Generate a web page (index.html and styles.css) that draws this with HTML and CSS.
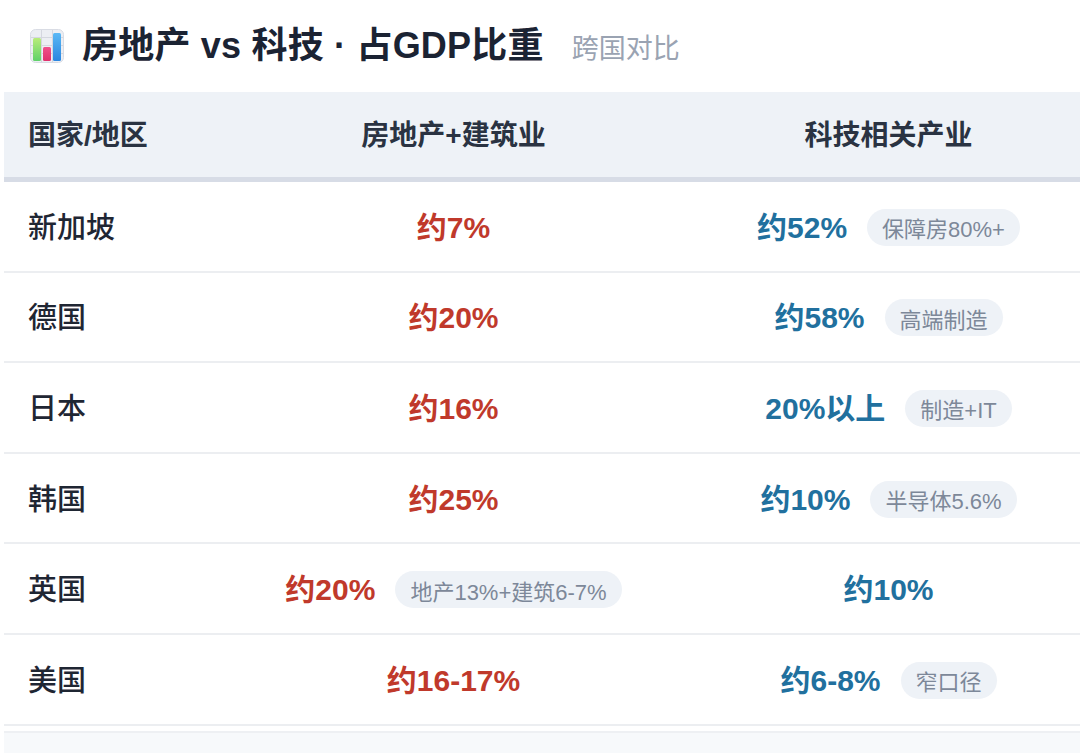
FILE: index.html
```html
<!DOCTYPE html>
<html lang="zh">
<head>
<meta charset="utf-8">
<link rel="stylesheet" href="styles.css">
</head>
<body>
<div class="title-bar">
  <svg class="icon" width="34" height="34" viewBox="0 0 34 34">
    <defs>
      <linearGradient id="gg" x1="0" y1="0" x2="0" y2="1"><stop offset="0" stop-color="#b9ec7a"/><stop offset="1" stop-color="#5fd16a"/></linearGradient>
      <linearGradient id="pg" x1="0" y1="0" x2="0" y2="1"><stop offset="0" stop-color="#f0508a"/><stop offset="1" stop-color="#e0306c"/></linearGradient>
      <linearGradient id="bg" x1="0" y1="0" x2="0" y2="1"><stop offset="0" stop-color="#5ab8f5"/><stop offset="1" stop-color="#2a86e0"/></linearGradient>
    </defs>
    <rect x="0.5" y="0.5" width="33" height="33" rx="5" fill="#eceef3" stroke="#d9dce4"/>
    <path d="M11.5 1v32M22.5 1v32M1 8.5h32M1 16.5h32M1 24.5h32" stroke="#d4d7df" stroke-width="1"/>
    <rect x="3" y="9" width="8" height="23" rx="1.5" fill="url(#gg)"/>
    <rect x="13" y="18" width="8" height="14" rx="1.5" fill="url(#pg)"/>
    <rect x="23" y="4" width="8" height="28" rx="1.5" fill="url(#bg)"/>
  </svg>
  <h1 class="title">房地产 vs 科技 · 占GDP比重</h1>
  <span class="subtitle">跨国对比</span>
</div>
<div class="table">
  <div class="row head">
    <div class="cell c1">国家/地区</div>
    <div class="cell c2">房地产+建筑业</div>
    <div class="cell c3">科技相关产业</div>
  </div>
  <div class="row">
    <div class="cell c1 name">新加坡</div>
    <div class="cell c2"><span class="val red">约7%</span></div>
    <div class="cell c3"><span class="val blue">约52%</span><span class="tag">保障房80%+</span></div>
  </div>
  <div class="row">
    <div class="cell c1 name">德国</div>
    <div class="cell c2"><span class="val red">约20%</span></div>
    <div class="cell c3"><span class="val blue">约58%</span><span class="tag">高端制造</span></div>
  </div>
  <div class="row">
    <div class="cell c1 name">日本</div>
    <div class="cell c2"><span class="val red">约16%</span></div>
    <div class="cell c3"><span class="val blue">20%以上</span><span class="tag">制造+IT</span></div>
  </div>
  <div class="row">
    <div class="cell c1 name">韩国</div>
    <div class="cell c2"><span class="val red">约25%</span></div>
    <div class="cell c3"><span class="val blue">约10%</span><span class="tag">半导体5.6%</span></div>
  </div>
  <div class="row">
    <div class="cell c1 name">英国</div>
    <div class="cell c2"><span class="val red">约20%</span><span class="tag">地产13%+建筑6-7%</span></div>
    <div class="cell c3"><span class="val blue">约10%</span></div>
  </div>
  <div class="row">
    <div class="cell c1 name">美国</div>
    <div class="cell c2"><span class="val red">约16-17%</span></div>
    <div class="cell c3"><span class="val blue">约6-8%</span><span class="tag">窄口径</span></div>
  </div>
</div>
<div class="footer"></div>
</body>
</html>
```
FILE: styles.css
```css
html, body {
  margin: 0;
  padding: 0;
  background: #ffffff;
  overflow: hidden;
  font-family: "Liberation Sans", "Noto Sans CJK SC", sans-serif;
}
.title-bar {
  height: 92px;
  display: flex;
  align-items: center;
  padding-left: 30px;
  box-sizing: border-box;
}
.icon {
  flex: none;
  margin-right: 18px;
}
.title {
  margin: 0;
  font-size: 36px;
  font-weight: 700;
  color: #1b2333;
  line-height: 1.2;
  white-space: nowrap;
  letter-spacing: 0.2px;
}
.subtitle {
  margin-left: 28px;
  font-size: 27px;
  color: #9aa3b2;
  white-space: nowrap;
}
.table {
  margin-left: 4px;
  width: 1102px;
}
.row {
  display: grid;
  grid-template-columns: 232px 435px 435px;
  height: 88.6px;
  border-bottom: 2px solid #eceef1;
}
.row.head {
  height: 85px;
  background: #eef2f7;
  border-bottom: 5px solid #d7dce6;
}
.cell {
  display: flex;
  align-items: center;
  justify-content: center;
  gap: 20px;
  white-space: nowrap;
  padding-bottom: 3px;
  box-sizing: border-box;
}
.cell.c1 {
  justify-content: flex-start;
  padding-left: 24px;
}
.head .cell {
  font-size: 28px;
  font-weight: 700;
  color: #2a3342;
}
.name {
  font-size: 29px;
  font-weight: 500;
  color: #1f2633;
}
.val {
  font-size: 30px;
  font-weight: 700;
}
.red { color: #c0392b; }
.blue { color: #21709e; }
.tag {
  display: inline-flex;
  align-items: center;
  height: 37px;
  margin-top: 5px;
  padding: 0 15px;
  border-radius: 19px;
  background: #eef2f7;
  color: #7d8899;
  font-size: 22px;
}
.footer {
  margin: 5px 0 0 4px;
  height: 40px;
  background: #f7f9fb;
  border-top: 2px solid #eef0f3;
}
```
